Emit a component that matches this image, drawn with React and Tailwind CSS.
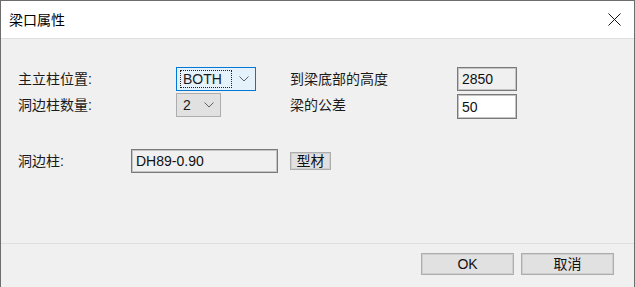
import React from "react";

const font = { fontFamily: '"Liberation Sans", "Noto Sans CJK SC", sans-serif' };

function Chevron() {
  return (
    <svg width="10" height="6" viewBox="0 0 10 6" className="shrink-0">
      <path d="M0.5 0.5 L5 5 L9.5 0.5" fill="none" stroke="#606060" strokeWidth="1" />
    </svg>
  );
}

function TextBox({ value, width, white, height = "h-[24px]" }) {
  return (
    <div
      className={`${width} ${height} flex items-center pl-[4px] border border-[#7a7a7a] shadow-[inset_0_0_0_1px_#c4c4c4] text-[14px] leading-none text-[#111] ${
        white ? "bg-white" : "bg-[#f0f0f0]"
      }`}
    >
      {value}
    </div>
  );
}

function Button({ children, className }) {
  return (
    <div
      className={`flex items-center justify-center bg-[#e1e1e1] border border-[#adadad] shadow-[inset_0_0_0_1px_#cfcfcf] text-[14px] leading-none text-[#111] ${className}`}
    >
      {children}
    </div>
  );
}

export default function App() {
  return (
    <div
      style={font}
      className="w-[635px] h-[287px] overflow-hidden bg-[#f0f0f0] border-l border-t border-r border-[#6d6d6d] flex flex-col"
    >
      {/* title bar */}
      <div className="h-[38px] shrink-0 bg-white border-b border-[#dedede] flex items-center justify-between pl-[8px] pr-[13px]">
        <span className="text-[14px] leading-none text-black pt-[1px]">梁口属性</span>
        <svg width="13" height="13" viewBox="0 0 13 13">
          <path d="M0.5 0.5 L12.5 12.5 M12.5 0.5 L0.5 12.5" stroke="#111" strokeWidth="1" />
        </svg>
      </div>

      {/* body */}
      <div className="h-[205px] shrink-0 border-b border-[#dfdfdf] pl-[17px] text-[14px] text-[#1a1a1a] leading-none">
        <div className="mt-[28px] h-[24px] flex items-center">
          <span className="w-[158px]">主立柱位置:</span>
          <div className="w-[80px] h-[24px] bg-[#e5f1fb] border border-[#0078d7] flex items-center pl-[3px] pr-[6px]">
            <div className="h-[18px] w-[52px] border border-dotted border-[#222] flex items-center pl-[2px]">BOTH</div>
            <div className="flex-1" />
            <Chevron />
          </div>
          <span className="ml-[34px] w-[167px]">到梁底部的高度</span>
          <TextBox value="2850" width="w-[60px]" />
        </div>

        <div className="mt-[2px] h-[24px] flex items-center">
          <span className="w-[158px]">洞边柱数量:</span>
          <div className="w-[45px] h-[24px] bg-[#e1e1e1] border border-[#adadad] flex items-center pl-[6px] pr-[6px]">
            <span>2</span>
            <div className="flex-1" />
            <Chevron />
          </div>
          <span className="ml-[69px] w-[167px]">梁的公差</span>
          <div className="mt-[3px]">
            <TextBox value="50" width="w-[60px]" height="h-[25px]" white />
          </div>
        </div>

        <div className="mt-[32px] h-[24px] flex items-center">
          <span className="w-[113px]">洞边柱:</span>
          <TextBox value="DH89-0.90" width="w-[147px]" />
          <Button className="ml-[12px] w-[41px] h-[18px]">型材</Button>
        </div>
      </div>

      {/* footer */}
      <div className="flex justify-end gap-[7px] pt-[9px] pr-[20px]">
        <Button className="w-[93px] h-[22px]">OK</Button>
        <Button className="w-[93px] h-[22px]">取消</Button>
      </div>
    </div>
  );
}
